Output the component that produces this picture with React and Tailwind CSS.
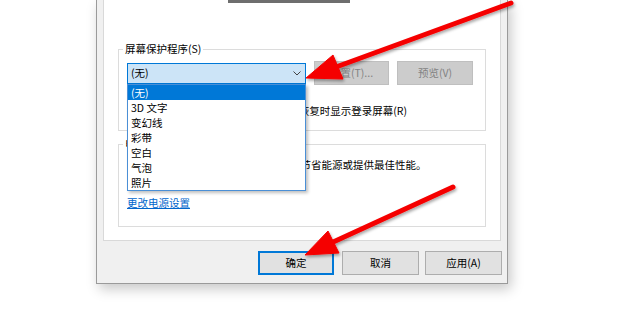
import React from 'react';

const items = ['(无)', '3D 文字', '变幻线', '彩带', '空白', '气泡', '照片'];

function Arrows() {
  return (
    <svg
      className="absolute inset-0 pointer-events-none"
      width="620"
      height="309"
      viewBox="0 0 620 309"
    >
      <defs>
        <filter id="sh" x="-10%" y="-10%" width="130%" height="140%">
          <feDropShadow dx="1" dy="2" stdDeviation="1.5" floodColor="#000" floodOpacity="0.35" />
        </filter>
      </defs>
      {/* arrow to combo box */}
      <g filter="url(#sh)" fill="#f50000" stroke="#f50000">
        <line x1="511" y1="3" x2="336" y2="67" strokeWidth="5" strokeLinecap="round" />
        <polygon points="306,78 333,55 343,79" strokeWidth="1" strokeLinejoin="round" />
      </g>
      {/* arrow to OK button */}
      <g filter="url(#sh)" fill="#f50000" stroke="#f50000">
        <line x1="453" y1="187" x2="331" y2="243" strokeWidth="5" strokeLinecap="round" />
        <polygon points="305,255 328,231 339,253" strokeWidth="1" strokeLinejoin="round" />
      </g>
    </svg>
  );
}

function Btn({ children, disabled, primary, className = '' }) {
  let look = 'border border-[#adadad] bg-[#e1e1e1] text-black';
  if (disabled) look = 'border border-[#bfbfbf] bg-[#cccccc] text-[#838383]';
  if (primary) look = 'border-2 border-[#0078d7] bg-[#e1e1e1] text-black';
  return (
    <div className={`flex items-center justify-center h-[24px] ${look} ${className}`}>
      {children}
    </div>
  );
}

export default function App() {
  return (
    <div className="relative w-[620px] h-[309px] overflow-hidden bg-white text-[10.5px] leading-[14px] text-black font-['Noto_Sans_CJK_SC','Liberation_Sans',sans-serif]">
      {/* dialog window */}
      <div className="ml-[96px] w-[412px] h-[284px] bg-[#f0f0f0] border-x border-b border-[#9a9a9a] shadow-[3px_5px_12px_rgba(0,0,0,0.22)] px-[6px]">
        {/* tab page */}
        <div className="h-[241px] bg-white border-x border-b border-[#d9d9d9] px-[14px]">
          {/* bottom of preview monitor */}
          <div className="ml-[110px] w-[122px] h-[3px] bg-[#6e6e6e]" />

          {/* screen saver group */}
          <fieldset className="mt-[39px] h-[89px] border border-[#dcdcdc] px-[8px] pt-[5px]">
            <legend className="-ml-[4px] px-[2px] leading-[14px]">屏幕保护程序(S)</legend>
            <div className="flex items-center gap-[8px]">
              <div className="relative w-[179px] h-[21px]">
                <div className="flex items-center justify-between h-full border border-[#0078d7] bg-[#cce4f7] pl-[3px] pr-[4px]">
                  <span>(无)</span>
                  <svg width="8" height="5" viewBox="0 0 8 5">
                    <polyline points="0.5,0.5 4,4 7.5,0.5" fill="none" stroke="#444" strokeWidth="1" />
                  </svg>
                </div>
                {/* open dropdown list */}
                <ul className="absolute left-0 top-full z-10 w-[179px] border border-[#4a8fd6] bg-white shadow-[2px_2px_3px_rgba(0,0,0,0.25)]">
                  {items.map((it, i) => (
                    <li
                      key={it}
                      className={
                        i === 0
                          ? 'h-[15px] leading-[15px] pl-[3px] bg-[#0078d7] text-white'
                          : 'h-[15px] leading-[15px] pl-[3px]'
                      }
                    >
                      {it}
                    </li>
                  ))}
                </ul>
              </div>
              <Btn disabled className="w-[75px]">设置(T)...</Btn>
              <Btn disabled className="w-[76px]">预览(V)</Btn>
            </div>
            <div className="flex items-center h-[20px] mt-[16px]">
              <span>等待(W):</span>
              <div className="ml-[6px] w-[38px] h-[18px] border border-[#7a7a7a] flex items-center pl-[3px]">1</div>
              <span className="ml-[6px]">分钟</span>
              <div className="ml-[33px] w-[13px] h-[13px] border border-[#333]" />
              <span className="ml-[4px]">在恢复时显示登录屏幕(R)</span>
            </div>
          </fieldset>

          {/* power management group */}
          <fieldset className="mt-[6px] h-[90px] border border-[#dcdcdc] px-[8px] pt-[7px]">
            <legend className="-ml-[4px] px-[2px] leading-[14px]">电源管理</legend>
            <p className="ml-[16px] whitespace-nowrap">通过调整显示亮度和其他电源设置节省能源或提供最佳性能。</p>
            <a href="#" className="block mt-[24px] w-fit text-[#0066cc] underline">更改电源设置</a>
          </fieldset>
        </div>

        {/* dialog buttons */}
        <div className="flex justify-end -mr-[1px] mt-[10px]">
          <Btn primary className="w-[76px] mr-[8px]">确定</Btn>
          <Btn className="w-[77px] mr-[6px]">取消</Btn>
          <Btn className="w-[77px]">应用(A)</Btn>
        </div>
      </div>

      <Arrows />
    </div>
  );
}
